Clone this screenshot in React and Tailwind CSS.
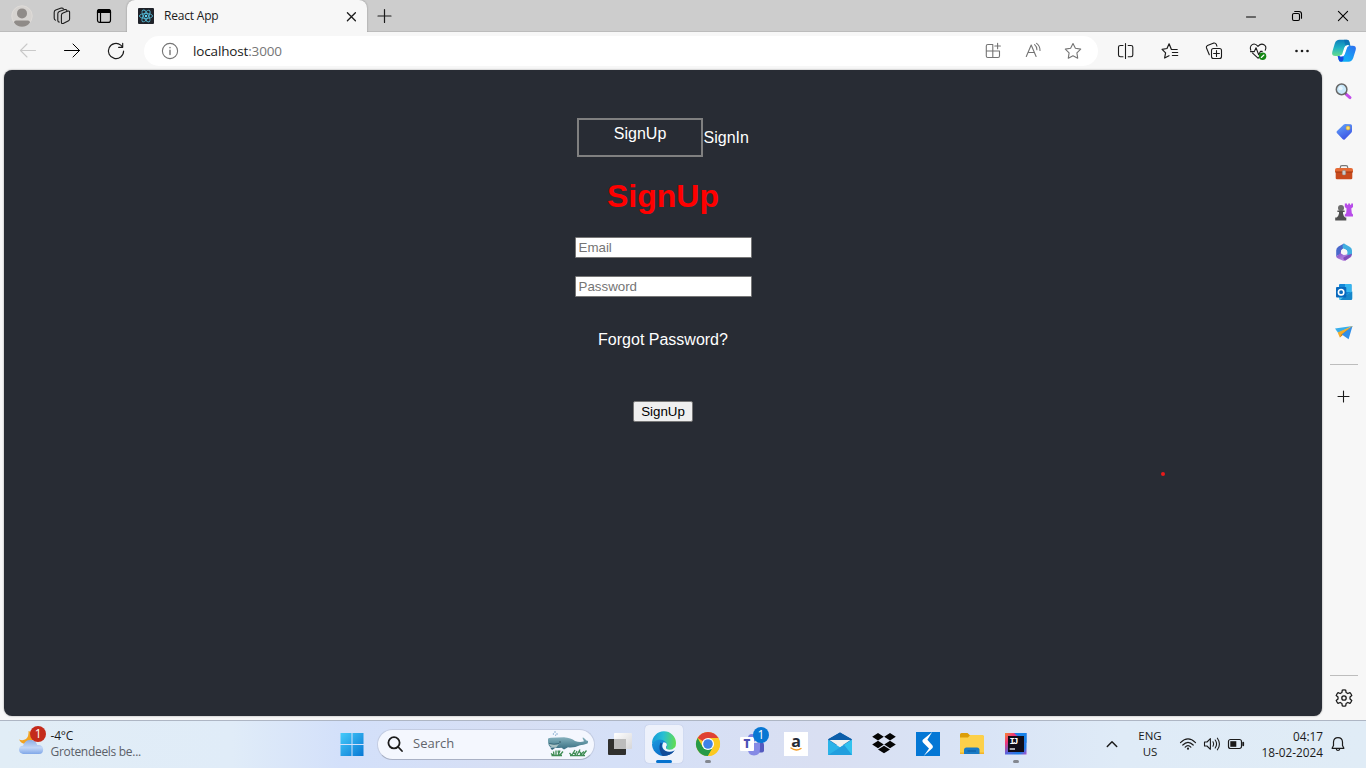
import React from "react";

const Icon = ({ children, className = "text-[#1b1b1b]", sw = 1.1 }) => (
  <svg
    width="24"
    height="24"
    viewBox="-12 -12 24 24"
    fill="none"
    stroke="currentColor"
    strokeWidth={sw}
    strokeLinecap="round"
    strokeLinejoin="round"
    className={"block shrink-0 overflow-visible " + className}
  >
    {children}
  </svg>
);

const Art = ({ children }) => (
  <svg width="24" height="24" viewBox="-12 -12 24 24" className="block shrink-0 overflow-visible">
    {children}
  </svg>
);

const Cell = ({ className, children }) => (
  <div className={"flex shrink-0 items-center justify-center " + className}>{children}</div>
);

function TabStrip() {
  return (
    <div className="flex h-8 shrink-0 bg-[#cdcdcd]">
      <div className="flex w-[127px] shrink-0 items-center border-b border-[#bcbcbc]">
        <Cell className="w-11">
          <Art>
            <circle r="10.6" fill="#d6d3d0" />
            <circle r="10.2" fill="none" stroke="#dedbd8" />
            <circle cy="-2.6" r="5" fill="#8f8b88" />
            <path d="M-8 6.5C-8 4.8-6.5 4.4-5 4.4H5C6.5 4.4 8 4.8 8 6.5C6 9.5 3 10.8 0 10.8S-6 9.5-8 6.5Z" fill="#8f8b88" />
          </Art>
        </Cell>
        <Cell className="w-9">
          <Icon sw={1.1}>
            <path d="M1-3L6-4.9Q7.6-5.3 7.6-3.7V3.1Q7.6 4.3 6.6 4.8L1.2 7.4Q-.6 8-.6 6.3V-.8Q-.6-2.4 1-3Z" />
            <path d="M-2.8 6.1Q-4.2 5.8-4.2 4.2V-2.3Q-4.2-4-2.7-4.6L2.8-6.5Q4.3-6.8 4.9-5.5" />
            <path d="M-6.4 4.2Q-7.8 3.8-7.8 2.3V-3.8Q-7.8-5.5-6.3-6.1L-.8-7.9Q.9-8.2 1.4-7" />
          </Icon>
        </Cell>
        <Cell className="w-12">
          <Icon sw={1.2} className="text-black">
            <rect x="-6.5" y="-6.4" width="13" height="12.8" rx="2.2" />
            <path d="M-6.5-3.5V-4Q-6.5-6.4-4.5-6.4H4.5Q6.5-6.4 6.5-4V-3.5Z" fill="currentColor" />
            <path d="M-3.5-3V6" />
          </Icon>
        </Cell>
      </div>
      <div className="z-10 flex w-60 shrink-0 items-center rounded-t-lg bg-[#f7f7f7] shadow-[0_0_2px_rgba(0,0,0,0.35)] [clip-path:inset(0_-3px_0_-3px)]">
        <svg width="16" height="16" viewBox="-8 -8 16 16" className="ml-[11px] shrink-0">
          <rect x="-8" y="-8" width="16" height="16" rx="1" fill="#20232a" />
          <g fill="none" stroke="#53b7d3" strokeWidth=".9">
            <ellipse rx="6.6" ry="2.5" />
            <ellipse rx="6.6" ry="2.5" transform="rotate(60)" />
            <ellipse rx="6.6" ry="2.5" transform="rotate(120)" />
          </g>
          <circle r="1.2" fill="#61dafb" />
        </svg>
        <span className="ml-2.5 text-[12px] tracking-[-0.2px] text-[#1b1b1b]">React App</span>
        <Cell className="ml-auto mr-1 w-6">
          <Icon sw={1.3}><path d="M-3.6-3.3L4.4 4.7M4.4-3.3L-3.6 4.7" /></Icon>
        </Cell>
      </div>
      <div className="flex flex-1 items-center border-b border-[#bcbcbc]">
        <Cell className="ml-[5px] w-6">
          <Icon sw={1.2}><path d="M-6 0H7M.5-6.5V6.5" /></Icon>
        </Cell>
        <div className="flex-1" />
        <Cell className="w-[46px]"><Icon sw={1} className="text-black"><path d="M-4.5 1H4.5" /></Icon></Cell>
        <Cell className="w-[46px]">
          <Icon className="text-black">
            <rect x="-4.5" y="-2.5" width="7" height="7" rx="1.4" />
            <path d="M-2.3-4.5H2Q4.5-4.5 4.5-2V2.3" />
          </Icon>
        </Cell>
        <Cell className="w-[46px]"><Icon className="text-black"><path d="M-4.6-4.6L4.6 4.6M4.6-4.6L-4.6 4.6" /></Icon></Cell>
      </div>
    </div>
  );
}

function Toolbar() {
  return (
    <div className="flex h-[38px] shrink-0 items-center bg-[#f7f7f7] pl-1.5">
      <Cell className="w-11"><Icon className="text-[#c9c9c9]"><path d="M7.5-.5H-7.5M-1-7L-7.5-.5L-1 6" /></Icon></Cell>
      <Cell className="w-11"><Icon sw={1} className="text-black"><path d="M-7.5-.5H7.5M1-7L7.5-.5L1 6" /></Icon></Cell>
      <Cell className="w-11">
        <Icon sw={1.15}><path d="M7.6 0A7.6 7.6 0 1 1 4.8-5.9L6.5-4.2M6.7-7.8V-3.7H2.6" /></Icon>
      </Cell>
      <div className="ml-1.5 flex h-[30px] w-[954px] items-center rounded-full bg-white pl-3.5">
        <Icon className="text-[#747474]"><circle r="7.6" /><path d="M0-.8V3.6M0-3.6V-3.2" strokeWidth="1.4" /></Icon>
        <span className="ml-[11px] text-[13.5px] tracking-[-0.15px] text-[#767676]"><span className="text-[#1b1b1b]">localhost</span>:3000</span>
        <div className="flex-1" />
        <Cell className="w-10">
          <Icon className="text-[#747474]">
            <path d="M-.2-6.5H-5.2Q-6.7-6.5-6.7-5V5Q-6.7 6.5-5.2 6.5H5Q6.5 6.5 6.5 5V0H-6.7M-.2-6.5V6.5M4.6-7.8V-2.2M1.8-5H7.4" />
          </Icon>
        </Cell>
        <Cell className="w-10">
          <Icon className="text-[#747474]">
            <path d="M-6.7 5.5L-1.8-6L3.1 5.5M-5.1 1.5H1.5M1.6-6.3Q4-4.3 3.9-1.2M3.6-7.6Q7-5 7-.6" />
          </Icon>
        </Cell>
        <Cell className="mr-[5px] w-10">
          <Icon className="text-[#747474]">
            <path d="M0-7.5L2.4-2.7L7.7-1.9L3.9 1.9L4.7 7.2L0 4.8L-4.7 7.2L-3.9 1.9L-7.7-1.9L-2.4-2.7Z" />
          </Icon>
        </Cell>
      </div>
      <Cell className="ml-1.5 w-11">
        <Icon><path d="M-3-5.5H-5.5Q-7.5-5.5-7.5-4V4Q-7.5 5.7-5.5 5.7H-3M2.2-5.5H5Q6.8-5.5 6.8-4V4Q6.8 5.7 5 5.7H2.2M-.5-7.5V7.5" /></Icon>
      </Cell>
      <Cell className="w-11">
        <Icon sw={1.2}><path d="M7.2-1.5H1.4L-.9-7.2L-3-2.5L-7.9-1.7L-4.4 1.8L-5.4 7L-1 4.7M2.4 1.5H7.7M2.4 4.5H7.7" /></Icon>
      </Cell>
      <Cell className="w-11">
        <Icon>
          <path d="M-4.7 3.8L-7.6-3.2Q-8-4.9-6.5-5.6L-.2-7.9Q1.5-8.2 2.3-6.7L2.9-4.8" />
          <rect x="-2.5" y="-2.5" width="10" height="10" rx="2" />
          <path d="M2.5-.4V5.4M-.4 2.5H5.4" />
        </Icon>
      </Cell>
      <Cell className="w-11">
        <Icon>
          <path d="M-7.2-.8Q-8.6-4.5-5.8-6.4T0-4.6Q3-8 6-6.2T7.2-.8M-5.4 2.2L0 7.2L1 6.4M-7.5.6H-3.7L-2-3.2L.7 3.8L2.4.4H4.2" />
          <circle cx="4.6" cy="5.2" r="3.7" fill="#138713" stroke="none" />
          <path d="M3.3 6.5L5.9 4" stroke="#fff" />
        </Icon>
      </Cell>
      <Cell className="w-11">
        <Icon><g fill="currentColor" stroke="none"><circle cx="-5.5" r="1.3" /><circle r="1.3" /><circle cx="5.5" r="1.3" /></g></Icon>
      </Cell>
      <Cell className="w-10">
        <svg width="24" height="24" viewBox="-12 -12 24 24" className="block overflow-visible">
          <defs>
            <linearGradient id="cpa" x1="0" y1="0" x2="0" y2="1"><stop stopColor="#0d7dbb" /><stop offset=".5" stopColor="#20b3c4" /><stop offset="1" stopColor="#67dc8c" /></linearGradient>
            <linearGradient id="cpb" x1="1" y1="0" x2="0" y2="1"><stop stopColor="#2e6df0" /><stop offset=".6" stopColor="#16a4f5" /><stop offset="1" stopColor="#08bdf6" /></linearGradient>
          </defs>
          <path d="M-4.5-11.2H3Q5-11.2 5.5-9L6.4-5.3H3.5Q1.4-5.3.8-3L-1.2 3.2Q-1.8 5-4 5H-8.5Q-12.8 5-11.7 .8L-9.2-7.5Q-8-11.2-4.5-11.2Z" fill="url(#cpa)" />
          <path d="M0-11.2H3Q5-11.2 5.5-9L6.4-5.3H3.5Q2-5.3 1.5-4.5Z" fill="#0862ae" opacity=".55" />
          <path d="M4.5 10.7H-3Q-5 10.7-5.4 8.5L-6.3 5H-4Q-1.8 5-1.2 3.2L.8-3Q1.5-5.3 3.5-5.3H8.5Q12.8-5.3 11.7-1L9.2 7Q8 10.7 4.5 10.7Z" fill="url(#cpb)" />
          <path d="M-3 10.7Q-5 10.7-5.4 8.5L-6.3 5H-4Q-1.8 5-1.2 3.2L-.4 7Q-.4 10.7-3 10.7Z" fill="#174ce0" />
          <path d="M3.8-5.3Q1.5-5.3.8-3L-1.2 3.2Q-1.8 5-4.2 5H-2.2Q-.5 5 .2 3L2.3-3Q2.8-5.3 4.7-5.3Z" fill="#fff" stroke="#fff" strokeWidth="1.2" />
        </svg>
      </Cell>
    </div>
  );
}

function Page() {
  return (
    <main className="relative ml-1 flex w-[1318px] shrink-0 flex-col items-center rounded-lg bg-[#282c34] pt-12 font-['Liberation_Sans',Arial,sans-serif] text-[16px] text-white shadow-[0_0_2px_rgba(0,0,0,0.4)]">
      <div className="flex items-center">
        <div className="flex h-[39px] w-[126px] justify-center border-2 border-[#808080] pt-0.5 leading-6">SignUp</div>
        <span className="ml-[0.5px] leading-6">SignIn</span>
      </div>
      <h1 className="mt-[21px] text-[32px] font-bold leading-9 text-[#ff0000]">SignUp</h1>
      <input className="mt-[23px] h-[21px] w-[177px] rounded-[1px] border border-[#767676] bg-white px-[3px] text-[13.333px] text-black placeholder:text-[#757575]" placeholder="Email" />
      <input className="mt-[18px] h-[21px] w-[177px] rounded-[1px] border border-[#767676] bg-white px-[3px] text-[13.333px] text-black placeholder:text-[#757575]" placeholder="Password" />
      <p className="mt-[31px] leading-6">Forgot Password?</p>
      <button className="mt-[49px] h-[21px] w-[60px] rounded-[2px] border border-[#767676] bg-[#efefef] text-[13.333px] leading-[19px] text-black">SignUp</button>
      <span className="absolute left-[1156.5px] top-[401.5px] size-1 rounded-full bg-[#e81b1b]" />
    </main>
  );
}

function Sidebar() {
  return (
    <aside className="flex w-11 flex-col items-center bg-[#f7f7f7] pt-0.5">
      <Cell className="h-10">
        <Art>
          <path d="M2.3 2.3L6 5.6" stroke="#c34dea" strokeWidth="3" strokeLinecap="round" />
          <path d="M.3.2L2 2" stroke="#555" strokeWidth="2" />
          <circle cx="-2.4" cy="-2.6" r="5.3" fill="#c8e8fa" stroke="#686868" strokeWidth="1.5" />
          <circle cx="-3.4" cy="-3.8" r="2" fill="#e8f6ff" />
        </Art>
      </Cell>
      <Cell className="h-10">
        <Art>
          <defs><linearGradient id="tag" x1="0" y1="0" x2=".5" y2="1"><stop stopColor="#65a8fa" /><stop offset="1" stopColor="#3d55e5" /></linearGradient></defs>
          <path d="M-7.1 1Q-8 0-7 -1L-.2-7.4Q.4-8 1.3-8L6.6-7.7Q8-7.6 8-6.2V-1Q8 0 7.3.8L.7 7.4Q-.3 8.2-1.2 7.3Z" fill="url(#tag)" />
          <circle cx="4" cy="-4" r="2" fill="#fce06a" stroke="#dfa625" strokeWidth=".6" />
        </Art>
      </Cell>
      <Cell className="h-10">
        <Art>
          <path d="M-3.7-3V-4.5Q-3.7-6.3-2-6.3H2Q3.7-6.3 3.7-4.5V-3" fill="none" stroke="#777" strokeWidth="1.2" />
          <path d="M-7-4H7Q9-4 9-2V0H-9V-2Q-9-4-7-4Z" fill="#e46a35" />
          <path d="M-8.3 0H8.3V6Q8.3 7.3 7 7.3H-7Q-8.3 7.3-8.3 6Z" fill="#c84a1d" />
          <path d="M-8.8 0H8.8" stroke="#9e3411" />
          <rect x="-1.7" y="-1.5" width="3.4" height="4.4" rx="1.2" fill="#cbcbcb" stroke="#888" strokeWidth=".5" />
        </Art>
      </Cell>
      <Cell className="h-10">
        <Art>
          <path d="M.8-8.6H3V-7.2H4.2V-8.6H6V-7.2H7.2V-8.6H9V-5L7.3-3.6L7.8 1.2L9 2.6V4.6H.8V2.6L2.2 1.2L2.6-3.6L.8-5Z" fill="#b84ce9" />
          <circle cx="-3" cy="-4" r="3" fill="#6d6d6d" />
          <path d="M-6.6-1.5H.6V0H-1V1.5Q-.6 4 1.2 5.5H2.3V8.4H-8.8V5.5H-7.3Q-5.4 4-5 1.5V0H-6.6Z" fill="#505050" />
        </Art>
      </Cell>
      <Cell className="h-10">
        <Art>
          <defs>
            <linearGradient id="ma" x1="0" y1="0" x2="1" y2="1"><stop stopColor="#7444c7" /><stop offset="1" stopColor="#d8a6e9" /></linearGradient>
          </defs>
          <path d="M0-8.4L-5.5-5.4Q-7.8-4-7.8-1.6V4.3L-3.5 2Q-3-.5-2.4-2.2Q-1-4 2-5Z" fill="#4968cb" />
          <path d="M-7.8 4.3Q-8 5.2-6 6.4L-1.5 8.6Q0 9.2 1.5 8.5L7.6 4.8L4.4 2L1.2 2.7L-3-1Q-3.5 2-7.8 4.3Z" fill="url(#ma)" />
          <path d="M0-8.4L6-5.1Q8-4 8-1.5V1.8Q8 4 5.5 4.7Q3.7 4.6 3.2 2Q4.5-2 0-3Q-3-5.5 0-8.4Z" fill="#41afe0" />
          <path d="M7.8 1.7Q8 4 5.8 5.6L1.5 8.5Q-1 8.5-.5 5.5L3.6 3.2Z" fill="#804dba" />
          <path d="M0-3.3L3-1.6V1.6L0 3.3L-3 1.6V-1.6Z" fill="#f7f7f7" />
        </Art>
      </Cell>
      <Cell className="h-10">
        <Art>
          <rect x="-5" y="-8" width="12.5" height="15" rx="1" fill="#1388d8" />
          <path d="M1-8H6.5Q7.5-8 7.5-7V0H1Z" fill="#35b6ef" />
          <path d="M-5 1L2 3L8.2-.5V6.5Q8.2 8-.7 8H-4Q-5 8-5 7Z" fill="#51c9f2" />
          <path d="M8.2-.5V7Q8.2 8 7 8H-4L2 3Z" fill="#1687cb" />
          <rect x="-8" y="-5" width="10.3" height="10.5" rx="1" fill="#0969bd" />
          <circle cx="-2.9" cy=".2" r="2.7" fill="none" stroke="#fff" strokeWidth="1.6" />
        </Art>
      </Cell>
      <Cell className="h-10">
        <Art>
          <path d="M-9-3.5L8.5-6L-5.8 1Z" fill="#38aeea" />
          <path d="M8.5-6L-6.3.5L-4.2 5.5L8.3-5.5Z" fill="#f3ad2c" />
          <path d="M8.5-6L-2.5 2.4L-4.2 5.5Z" fill="#be751f" />
          <path d="M8.5-6L4.6 7.3L-2.2 2.6Z" fill="#318fe9" />
        </Art>
      </Cell>
      <div className="mt-3 h-px w-7 bg-[#bdbdbd]" />
      <Cell className="mt-5 h-6"><Icon><path d="M-6-.5H5M-.5-6V5" /></Icon></Cell>
      <div className="mt-auto h-px w-7 shrink-0 bg-[#bdbdbd]" />
      <Cell className="mb-1.5 mt-2.5 h-6">
        <Icon sw={1.3}>
          <circle r="2.2" />
          <path d="M-1.7-7.8Q0-8.3 1.7-7.8L2.1-5.5L3.8-4.5L6-5.4Q7.2-4.1 7.8-2.4L6-.9V.9L7.8 2.4Q7.2 4.1 6 5.4L3.8 4.5L2.1 5.5L1.7 7.8Q0 8.3-1.7 7.8L-2.1 5.5L-3.8 4.5L-6 5.4Q-7.2 4.1-7.8 2.4L-6 .9V-.9L-7.8-2.4Q-7.2-4.1-6-5.4L-3.8-4.5L-2.1-5.5Z" />
        </Icon>
      </Cell>
    </aside>
  );
}

function Whale() {
  return (
    <svg width="43" height="28" viewBox="0 0 43 28" className="block shrink-0">
      <defs><linearGradient id="wh" x1="0" y1="0" x2="0" y2="1"><stop stopColor="#85b0bd" /><stop offset=".5" stopColor="#5d909f" /><stop offset="1" stopColor="#396d82" /></linearGradient></defs>
      <path d="M2 10Q1.5 7.7 5 7.7L18 7.3Q25 7.7 29 11Q34 12.7 38 11.3L36.5 8Q36.5 6.7 39 9L40.5 10.5Q43 10.7 41.5 13.5Q37 15 34 15.2Q28 18 22 17.2L18 19.5L15.5 17.7Q8 18.5 4.2 17Q2 15.5 2 10Z" fill="url(#wh)" />
      <path d="M3 13.8Q8 15.2 13 14L10 17.7Q4.2 17.6 3 13.8Z" fill="#a9c2c4" />
      <path d="M3 13.5Q8 15 13 13.5" stroke="#315e70" strokeWidth=".8" fill="none" />
      <circle cx="14" cy="12" r=".7" fill="#274450" />
      <path d="M4 17.5L9 18.2L6 20Z" fill="#35677c" />
      <g fill="#7fa8cc"><circle cx="9" cy="2" r=".8" /><circle cx="11" cy="4" r=".8" /><circle cx="7.4" cy="4" r=".7" /><circle cx="9.6" cy="5.2" r=".6" /></g>
      <path d="M5 23.5L8 25.8M8 25.5L7.5 21.5M10 25.5V20.5M12 25.5L14 20.5M14 25L17 21.5M5.5 25.5H16M12 20.5L13 25M23.5 23L26 25.8M26 25L29 20M29 25L31 21M31 25L34 19.5M34 25L38 21.5M37 25L40.5 20.5M27 22L30 25M33 21L36 25M24 25.7H39" stroke="#3f8c54" strokeWidth="1.3" fill="none" />
    </svg>
  );
}

function TaskbarApps() {
  return (
    <>
      <Cell className="relative h-[38px] w-[38px] rounded bg-[#edf1fb] shadow-[0_0_1px_rgba(90,110,160,0.45)]">
        <Art>
          <defs>
            <linearGradient id="ea" x1="0" y1=".4" x2="1" y2=".5"><stop stopColor="#149bd9" /><stop offset=".45" stopColor="#28bfd3" /><stop offset="1" stopColor="#62dd50" /></linearGradient>
            <linearGradient id="eb" x1="0" y1="0" x2=".7" y2="1"><stop stopColor="#1b9de0" /><stop offset="1" stopColor="#0a68c6" /></linearGradient>
          </defs>
          <path d="M-12 0A12 12 0 0 0-.5 12Q6.5 12 10.5 6.3L0-6Q-9-8-12 0Z" fill="url(#eb)" />
          <path d="M-12-.5A12 12 0 0 1 12-.8Q12 5.7 6 5.9Q1 5.6 2.4 3.5Q4.3 1 1.7-2Q-5-7.5-12-.5Z" fill="url(#ea)" />
          <path d="M-3.5-1.5Q-6.5 5.5-1.3 11.9Q6.5 12.3 10.6 6.5Q5.8 9 1 6.5Q-3.5 4-1.8-.5Z" fill="#114c9a" />
          <path d="M-.6-1.8Q3-1.6 2.9 1.2Q1.2 3.5 2.2 4.8Q6.6 7.4 10.9 3.6Q12 4.3 10.4 6.4Q5.8 9 1.3 6.8Q-3.5 3.5-.6-1.8Z" fill="#f1f6fc" />
        </Art>
        <span className="absolute bottom-0 left-[11px] h-[3px] w-4 rounded-full bg-[#0672ce]" />
      </Cell>
      <Cell className="relative h-[38px] w-[38px]">
        <Art>
          <circle r="12" fill="#fbc922" />
          <path d="M0 0L-10.4-6A12 12 0 0 1 10.4-6H0Z" fill="#df4034" />
          <path d="M-10.4-6A12 12 0 0 0 0 12L5.2 3L-5.2 3Z" fill="#279a48" />
          <path d="M10.4-6A12 12 0 0 1 0 12L5.2 3V-6Z" fill="#fbc922" />
          <circle r="6.1" fill="#fff" /><circle r="4.8" fill="#3f82e8" />
        </Art>
        <span className="absolute bottom-0 left-4 h-[3px] w-1.5 rounded-full bg-[#83878f]" />
      </Cell>
      <Cell className="h-[38px] w-[38px]">
        <Art>
          <rect x="4" y="-1.5" width="8" height="10" rx="2" fill="#545abf" />
          <path d="M-4-1H8V5Q8 11.5 2 11.5Q-4 11.5-4 5Z" fill="#858ae5" />
          <circle cx="0" cy="-6" r="4" fill="#7980e0" />
          <rect x="-12" y="-7" width="14" height="14" rx="1" fill="#fff" />
          <text x="-5" y="4.2" textAnchor="middle" fontSize="11.5" fontWeight="800" fill="#4b51b4" fontFamily="Open Sans, sans-serif">T</text>
          <circle cx="9" cy="-9" r="8" fill="#0877d3" />
          <text x="9" y="-4.7" textAnchor="middle" fontSize="12" fill="#fff" fontFamily="Open Sans, sans-serif">1</text>
        </Art>
      </Cell>
      <Cell className="h-[38px] w-[38px]">
        <Art>
          <rect x="-12" y="-12" width="24" height="24" fill="#fff" />
          <text x="0" y="3.2" textAnchor="middle" fontSize="16" fontWeight="700" fill="#252b35" fontFamily="Open Sans, sans-serif">a</text>
          <path d="M-5 4Q0 7.6 5 4.5" fill="none" stroke="#f39a24" strokeWidth="1.4" strokeLinecap="round" />
        </Art>
      </Cell>
      <Cell className="h-[38px] w-[38px]">
        <Art>
          <path d="M-12-4.5L0-11.5L12-4.5V1H-12Z" fill="#0c5eaa" />
          <path d="M-12-4.5L12 11H-12Z" fill="#2bb3e8" />
          <path d="M-12 11L12-4.5V11Z" fill="#32c2ee" />
          <path d="M-12 11L4 .7L12 11Z" fill="#229fde" />
          <path d="M-10.5-4H10.5L0 3Z" fill="#f1f2f0" />
          <path d="M-12-4.8L0-11.5L12-4.8L10.5-4H-10.5Z" fill="#0c5eaa" />
        </Art>
      </Cell>
      <Cell className="h-[38px] w-[38px]">
        <Art>
          <path d="M-6-11L-.2-7.2L-6-3.6L-11.8-7.2ZM6-11L11.8-7.2L6-3.6L.2-7.2ZM-6-3.2L-.2.4L-6 4.2L-11.8 .4ZM6-3.2L11.8 .4L6 4.2L.2 .4ZM0 1.7L6 5.5L0 9.3L-6 5.5Z" fill="#050505" />
        </Art>
      </Cell>
      <Cell className="h-[38px] w-[38px]">
        <Art>
          <rect x="-12" y="-12" width="24" height="24" fill="#0477d5" />
          <path d="M4.2-12L-5.2-4.2Q-6.3-3-5-1.5L1 4.6L-4.3 12L4.3 4.2Q5.6 2.8 4.5 1.4L-.6-4.2Z" fill="#fff" />
        </Art>
      </Cell>
      <Cell className="h-[38px] w-[38px]">
        <Art>
          <path d="M-12-9.5Q-12-11-10.5-11H-4.5L-1.8-8.5H10.5Q12-8.5 12-7V0H-12Z" fill="#dc9e09" />
          <path d="M-12-6.5H-4L-1.8-9H10.5Q12-9 12-7.5V10H-12Z" fill="#fcd04a" />
          <path d="M-12 8.5H12V10H-12Z" fill="#f3b32b" />
          <path d="M-8 10V6Q-8 3.5-5.5 3.5H5Q7.5 3.5 7.5 6V10Z" fill="#197ac5" />
          <path d="M-4.5 7H4" stroke="#09589e" />
        </Art>
      </Cell>
      <Cell className="relative h-[38px] w-[38px]">
        <Art>
          <defs><linearGradient id="ij" x1="0" y1="0" x2="1" y2="1"><stop stopColor="#f58a33" /><stop offset=".25" stopColor="#f23478" /><stop offset=".5" stopColor="#5a63dc" /><stop offset=".8" stopColor="#157fe8" /><stop offset="1" stopColor="#b84ac7" /></linearGradient></defs>
          <rect x="-11" y="-11" width="21.5" height="21.5" fill="url(#ij)" />
          <path d="M-2-11H10.5V-1Z" fill="#1782e8" />
          <rect x="-8" y="-8" width="16" height="16" fill="#100d18" />
          <text x="-6.5" y="0" fontSize="9" fontWeight="700" fill="#fff" fontFamily="Liberation Mono, monospace" textLength="9">IJ</text>
          <path d="M-6.3 5H-1" stroke="#fff" strokeWidth="1.3" />
        </Art>
        <span className="absolute bottom-0 left-4 h-[3px] w-1.5 rounded-full bg-[#83878f]" />
      </Cell>
    </>
  );
}

function Taskbar() {
  return (
    <footer className="flex h-12 shrink-0 items-center border-t border-[#aeb6c4] bg-[linear-gradient(90deg,#e1edf6_0%,#e0ecf8_17%,#d3e0fa_25%,#d7dff4_38%,#d5e0f7_45%,#d9dff2_60%,#d9e4f6_72%,#dfebf7_82%,#e0ecf6_100%)] pb-px text-[12px] text-[#1b1b1b]">
      <div className="flex w-[339px] items-center pl-[19px]">
        <svg width="28" height="32" viewBox="19 728 28 32" className="block shrink-0 overflow-visible">
          <defs><linearGradient id="cl" x1="0" y1="0" x2="0" y2="1"><stop stopColor="#8eaee5" /><stop offset=".55" stopColor="#c2d7f7" /><stop offset="1" stopColor="#80a7e8" /></linearGradient></defs>
          <path d="M28.5 731Q29 736 26 739Q23 741 19 739.5Q22 745 28 744Q34 742 34 733Z" fill="#f2a322" />
          <path d="M23 754Q19 753 19 749.5Q19.2 746 23 745.8Q25 739.5 31 740Q36 740.5 37.2 745Q43 744.5 43.2 749.5Q43 754 39 754Z" fill="url(#cl)" />
          <circle cx="38" cy="734" r="8" fill="#c42b1c" />
          <text x="38.3" y="738.4" textAnchor="middle" fontSize="12" fill="#fff" fontFamily="Open Sans, sans-serif">1</text>
        </svg>
        <div className="ml-[3.5px] leading-4">
          <div className="tracking-[-0.2px]">-4°C</div>
          <div className="tracking-[-0.3px] text-[#5b6068]">Grotendeels be...</div>
        </div>
      </div>
      <Cell className="w-[25px]">
        <Art>
          <defs><linearGradient id="win" x1="0" y1="0" x2="1" y2="1"><stop stopColor="#46cbfa" /><stop offset="1" stopColor="#0878d4" /></linearGradient></defs>
          <path d="M-11.5-11H-.5V0H-11.5ZM.5-11H11.5V0H.5ZM-11.5 1H-.5V12H-11.5ZM.5 1H11.5V12H.5Z" fill="url(#win)" />
        </Art>
      </Cell>
      <div className="ml-[13px] flex h-[31px] w-[218px] shrink-0 items-center rounded-full border border-[#c3cce2] border-b-[#a9b1c5] bg-[#f4f7fe] pl-[5px] pr-[5px]">
        <Icon sw={1.8}><circle cx="-1" cy="-1.2" r="5.6" /><path d="M3.2 3L7 7" /></Icon>
        <span className="ml-1.5 text-[13px] text-[#62656c]">Search</span>
        <div className="ml-auto"><Whale /></div>
      </div>
      <Cell className="ml-[13px] w-6">
        <Art>
          <defs><linearGradient id="tv" x1="0" y1="0" x2="1" y2="1"><stop stopColor="#fff" /><stop offset="1" stopColor="#d6d6d8" /></linearGradient></defs>
          <rect x="-6" y="-11" width="18" height="16" rx="1" fill="url(#tv)" />
          <rect x="-12" y="-5" width="18" height="16" rx="1" fill="#30302e" />
          <rect x="-6" y="-5" width="12" height="10" fill="#bcbcbc" />
        </Art>
      </Cell>
      <div className="ml-[13px] flex gap-1.5"><TaskbarApps /></div>
      <div className="flex-1" />
      <Cell className="w-6"><Icon sw={1.5}><path d="M-4.7 2.5L0-2.2L4.7 2.5" /></Icon></Cell>
      <div className="w-[52px] text-center text-[11.5px] leading-4">ENG<br />US</div>
      <Cell className="ml-0 w-6">
        <Icon sw={1.2}><path d="M-7.5-1.4Q0-8.7 7.5-1.4M-5.2 1Q0-4.4 5.2 1M-2.8 3.2Q0 .2 2.8 3.2" /><circle cy="4.7" r="1.1" fill="currentColor" stroke="none" /></Icon>
      </Cell>
      <Cell className="w-6">
        <Icon><path d="M-7.5-2H-5L-1.6-5.3V5.3L-5 2H-7.5ZM1-2.2Q2.4 0 1 2.2M3.2-4Q6 0 3.2 4M5.4-5.8Q9.5 0 5.4 5.8" /></Icon>
      </Cell>
      <Cell className="w-6">
        <Icon sw={1.2}><rect x="-7.5" y="-4.5" width="13" height="9" rx="2" /><rect x="-5.7" y="-2.8" width="6" height="5.6" fill="currentColor" stroke="none" /><path d="M7.2-1.3V1.3" strokeWidth="1.8" /></Icon>
      </Cell>
      <div className="w-[75px] whitespace-nowrap text-right text-[11.8px] leading-4">04:17<br />18-02-2024</div>
      <Cell className="ml-[3px] mr-4 w-6">
        <Icon sw={1.2}><path d="M-5.9 4.3L-4.5 1.5V-2Q-4.2-6.3 0-6.3T4.5-2V1.5L5.9 4.3ZM-1.8 4.7Q-1.5 6.5 0 6.5T1.8 4.7" /></Icon>
      </Cell>
    </footer>
  );
}

export default function App() {
  return (
    <div className="flex h-[768px] w-[1366px] flex-col overflow-hidden bg-[#f7f7f7] font-['Open_Sans','Noto_Sans',sans-serif]">
      <TabStrip />
      <Toolbar />
      <div className="flex h-[646px] shrink-0">
        <Page />
        <Sidebar />
      </div>
      <div className="h-1 shrink-0" />
      <Taskbar />
    </div>
  );
}
